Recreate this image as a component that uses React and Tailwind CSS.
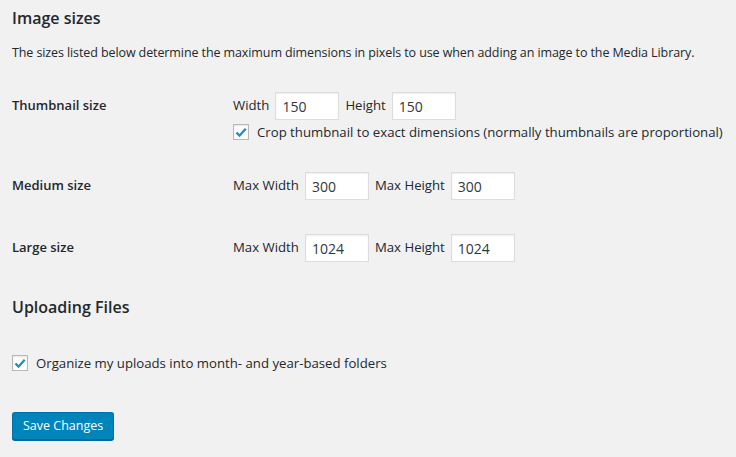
import React from 'react';

const font = { fontFamily: '"Open Sans", "Noto Sans", Arial, sans-serif' };

function NumberBox({ value }) {
  return (
    <input
      type="text"
      defaultValue={value}
      className="h-7 w-16 border border-[#ddd] bg-white px-[6px] text-[14px] text-[#32373c] shadow-[inset_0_1px_2px_rgba(0,0,0,0.07)] outline-none"
      style={font}
    />
  );
}

function Check({ label }) {
  return (
    <label className="flex items-center gap-2">
      <span className="flex h-4 w-4 items-center justify-center border border-[#b4b9be] bg-white shadow-[inset_0_1px_2px_rgba(0,0,0,0.1)]">
        <svg viewBox="0 0 16 16" className="h-[15px] w-[15px]">
          <path d="M2.8 8 L6.3 11.6 L13.4 3.6" fill="none" stroke="#1e8cbe" strokeWidth="2.6" />
        </svg>
      </span>
      <span className="text-[13.2px] leading-4">{label}</span>
    </label>
  );
}

function SizeRow({ title, a, b, av, bv, className, children }) {
  return (
    <div className={`flex ${className}`}>
      <div className="flex h-7 w-[221px] items-center text-[13px] font-semibold">{title}</div>
      <div className="flex flex-col">
        <div className="flex h-7 items-center gap-[6px] text-[13.2px]">
          <span>{a}</span>
          <NumberBox value={av} />
          <span>{b}</span>
          <NumberBox value={bv} />
        </div>
        {children}
      </div>
    </div>
  );
}

export default function App() {
  return (
    <main className="min-h-screen bg-[#f1f1f1] pl-3 pt-[6px] text-[#23282d]" style={font}>
      {/* Image sizes */}
      <h2 className="h-6 text-[16px] font-semibold leading-6">Image sizes</h2>
      <p className="mt-[13px] text-[12.5px] leading-5 tracking-[-0.1px]">
        The sizes listed below determine the maximum dimensions in pixels to use when adding an image to the Media Library.
      </p>

      <SizeRow title="Thumbnail size" a="Width" b="Height" av="150" bv="150" className="mt-[29px]">
        <div className="mt-1">
          <Check label="Crop thumbnail to exact dimensions (normally thumbnails are proportional)" />
        </div>
      </SizeRow>
      <SizeRow title="Medium size" a="Max Width" b="Max Height" av="300" bv="300" className="mt-[32px]" />
      <SizeRow title="Large size" a="Max Width" b="Max Height" av="1024" bv="1024" className="mt-[34px]" />

      {/* Uploading Files */}
      <h2 className="mt-[33px] h-6 text-[16px] font-semibold leading-6">Uploading Files</h2>
      <div className="mt-[36px]">
        <Check label="Organize my uploads into month- and year-based folders" />
      </div>

      <button
        type="button"
        className="mt-[41px] h-7 rounded-[3px] border border-[#0073aa] border-b-[#006799] bg-[#0085ba] px-[10px] text-[12.5px] text-white shadow-[0_1px_0_#006799]"
        style={font}
      >
        Save Changes
      </button>
    </main>
  );
}
